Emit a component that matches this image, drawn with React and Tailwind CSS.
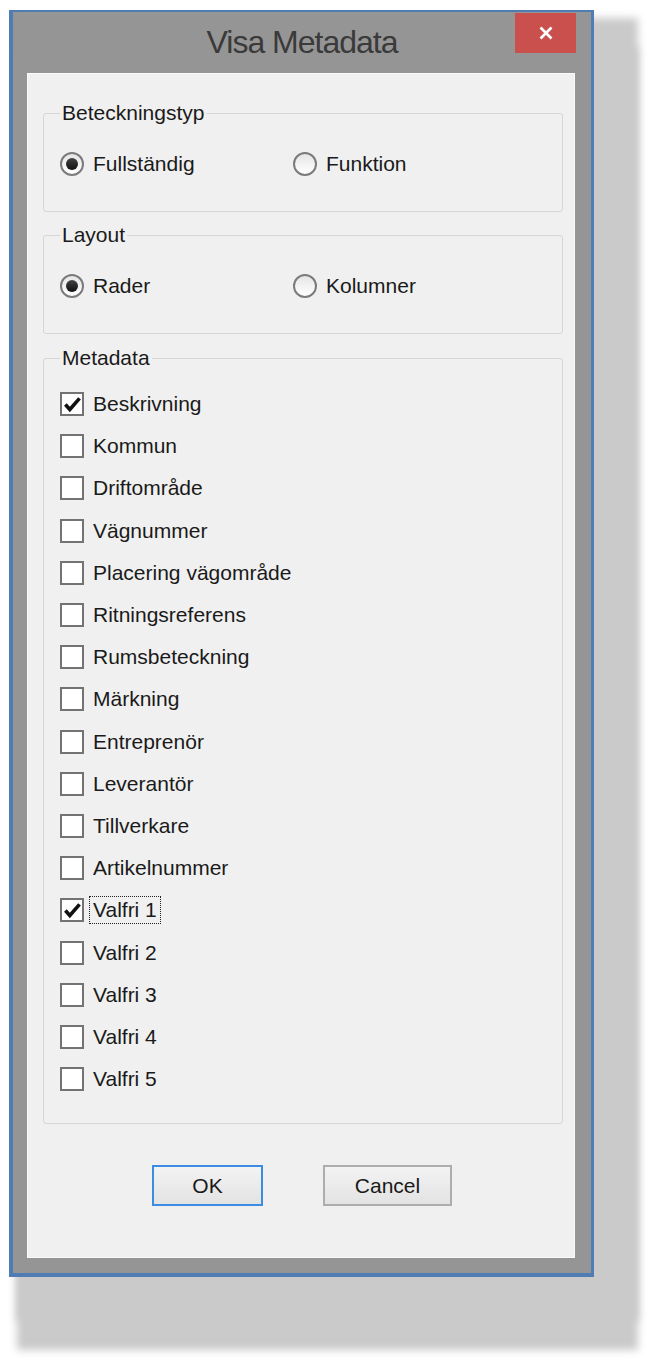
import React from "react";

const metadataItems = [
	{ label: "Beskrivning", checked: true },
	{ label: "Kommun" },
	{ label: "Driftområde" },
	{ label: "Vägnummer" },
	{ label: "Placering vägområde" },
	{ label: "Ritningsreferens" },
	{ label: "Rumsbeteckning" },
	{ label: "Märkning" },
	{ label: "Entreprenör" },
	{ label: "Leverantör" },
	{ label: "Tillverkare" },
	{ label: "Artikelnummer" },
	{ label: "Valfri 1", checked: true, focused: true },
	{ label: "Valfri 2" },
	{ label: "Valfri 3" },
	{ label: "Valfri 4" },
	{ label: "Valfri 5" },
];

function Radio({ label, checked }) {
	return (
		<div className="flex h-[30px] items-center">
			<span className="flex h-[24px] w-[24px] items-center justify-center rounded-full border-[2px] border-[#7b7b7b] bg-gradient-to-b from-[#e6e6e6] to-white">
				{checked && (
					<span className="h-[12px] w-[12px] rounded-full bg-gradient-to-b from-[#444] to-[#111]" />
				)}
			</span>
			<span className="ml-[9px] leading-[30px]">{label}</span>
		</div>
	);
}

function CheckBox({ label, checked, focused }) {
	return (
		<div className="flex h-[42.2px] items-center">
			<span className="flex h-[24px] w-[24px] items-center justify-center border-[2px] border-[#737373] bg-white">
				{checked && (
					<svg viewBox="0 0 20 20" className="h-[19px] w-[19px]">
						<path
							d="M2.5 10 L7.2 15.2 L17.4 3.6"
							fill="none"
							stroke="#111"
							strokeWidth="3.8"
						/>
					</svg>
				)}
			</span>
			<span
				className={
					focused
						? "ml-[5px] border border-dotted border-[#222] px-[3px] leading-[26px]"
						: "ml-[5px] border border-transparent px-[3px] leading-[26px]"
				}
			>
				{label}
			</span>
		</div>
	);
}

function GroupBox({ title, className, children }) {
	return (
		<fieldset
			className={
				"ml-[15px] w-[520px] rounded-[3px] border border-[#d6d6d6] pl-[16px] " +
				className
			}
		>
			<legend className="px-[2px] leading-[24px]">{title}</legend>
			{children}
		</fieldset>
	);
}

export default function App() {
	return (
		<div
			className="h-[1368px] w-[650px] bg-white pl-[9px] pt-[10px] text-[21px] text-[#1a1a1a]"
			style={{ fontFamily: '"Liberation Sans", Arial, sans-serif' }}
		>
			{/* WINDOW */}
			<div className="flex h-[1267px] w-[585px] flex-col border-b-[4px] border-l-[4px] border-r-[3px] border-t-[2px] border-[#4f7db3] bg-[#959595] shadow-[26px_26px_8px_18px_#cacaca,26px_55px_8px_18px_#cacaca]">
				{/* TITLE BAR */}
				<div className="grid h-[61px] grid-cols-[1fr_auto_1fr]">
					<div />
					<div className="self-center pb-[2px] text-[32px] tracking-[-1px] text-[#3a3a3a]">
						Visa Metadata
					</div>
					<div className="flex justify-end">
						<button className="mr-[15px] mt-[1px] flex h-[40px] w-[61px] items-center justify-center bg-[#c9504d]">
							<svg viewBox="0 0 16 16" className="h-[16px] w-[16px]">
								<path
									d="M2.5 2.5 L13.5 13.5 M13.5 2.5 L2.5 13.5"
									stroke="white"
									strokeWidth="2.6"
								/>
							</svg>
						</button>
					</div>
				</div>

				{/* CLIENT AREA */}
				<div className="ml-[14px] h-[1185px] w-[548px] border border-[#fafafa] bg-[#f0f0f0] pt-[27px]">
					<GroupBox title="Beteckningstyp" className="pb-[32px] pt-[24px]">
						<div className="flex">
							<div className="w-[233px]">
								<Radio label="Fullständig" checked />
							</div>
							<Radio label="Funktion" />
						</div>
					</GroupBox>

					<GroupBox title="Layout" className="mt-[11px] pb-[32px] pt-[24px]">
						<div className="flex">
							<div className="w-[233px]">
								<Radio label="Rader" checked />
							</div>
							<Radio label="Kolumner" />
						</div>
					</GroupBox>

					<GroupBox title="Metadata" className="mt-[12px] pb-[23px] pt-[13px]">
						{metadataItems.map((item) => (
							<CheckBox
								key={item.label}
								label={item.label}
								checked={item.checked}
								focused={item.focused}
							/>
						))}
					</GroupBox>

					{/* BUTTONS */}
					<div className="mt-[41px] flex gap-[60px] pl-[124px]">
						<button className="h-[41px] w-[111px] border-[2px] border-[#3b8de4] bg-gradient-to-b from-[#f3f3f3] to-[#e3e3e3] leading-[37px]">
							OK
						</button>
						<button className="h-[41px] w-[129px] border-[2px] border-[#adadad] bg-gradient-to-b from-[#f3f3f3] to-[#e3e3e3] leading-[37px]">
							Cancel
						</button>
					</div>
				</div>
			</div>
		</div>
	);
}
